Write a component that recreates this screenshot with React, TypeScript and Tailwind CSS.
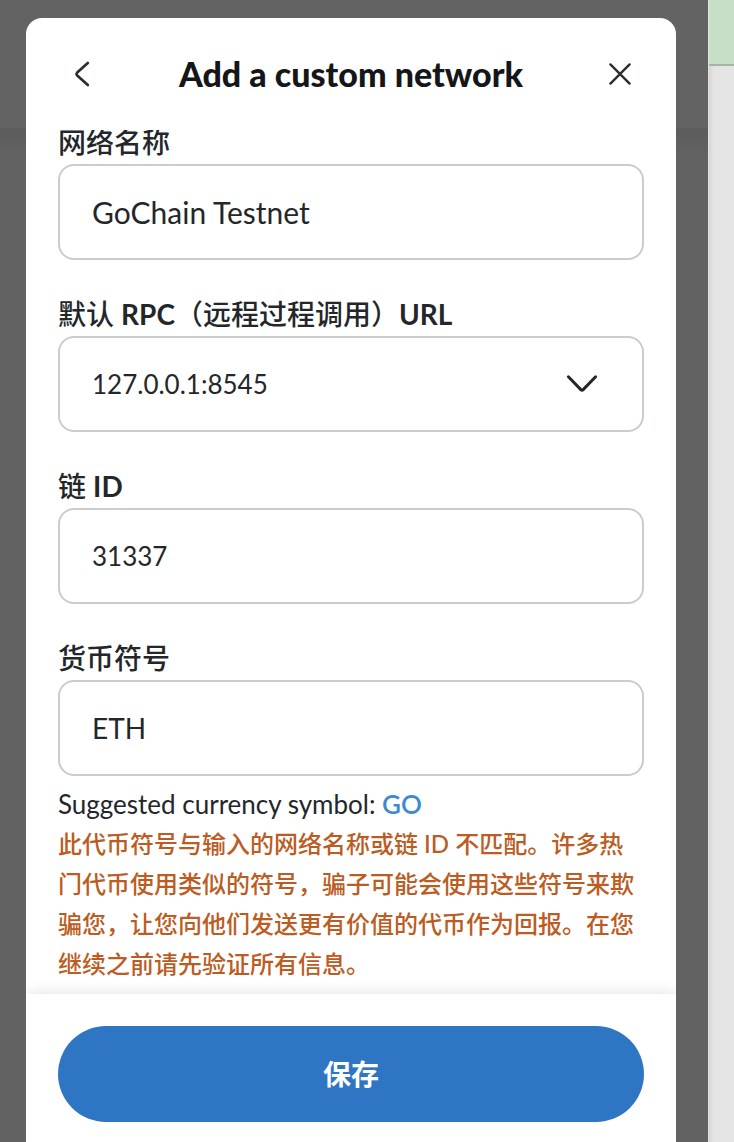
import { useState, type ReactNode } from "react";

type FieldProps = { id: string; label: ReactNode; children: ReactNode };

function Field({ id, label, children }: FieldProps) {
  return (
    <div className="flex flex-col">
      <label htmlFor={id} className="text-[28px] leading-[44px] font-medium">
        {label}
      </label>
      {children}
    </div>
  );
}

type TextFieldProps = { id: string; label: ReactNode; initial: string; size: string };

function TextField({ id, label, initial, size }: TextFieldProps) {
  const [value, setValue] = useState(initial);
  return (
    <Field id={id} label={label}>
      <input
        id={id}
        type="text"
        value={value}
        onChange={(e) => setValue(e.target.value)}
        className={`h-24 w-full rounded-2xl border-2 border-[#c8cdd2] bg-white px-8 outline-none ${size}`}
      />
    </Field>
  );
}

export default function App() {
  return (
    <div className="flex h-screen overflow-hidden bg-[#e5e5e5] font-['Lato','Noto_Sans_CJK_SC',sans-serif] text-[#24272a]">
      <div className="grid min-w-0 flex-1 grid-rows-[128px_1fr] bg-[#626262]">
        <div className="col-start-1 row-start-1 bg-[#636363]" />
        <div className="col-start-1 row-start-2 h-7 bg-linear-to-b from-[#5c5c5c] to-[#626262]" />
        <section
          role="dialog"
          aria-labelledby="dialog-title"
          className="z-10 col-start-1 row-span-2 row-start-1 mx-8 mt-[18px] ml-[26px] flex min-h-0 flex-col overflow-hidden rounded-t-2xl bg-white"
        >
          <header className="flex h-28 shrink-0 items-center justify-between px-8">
            <button type="button" aria-label="Back" className="flex size-12 items-center justify-center">
              <svg viewBox="0 0 32 32" className="size-8" fill="none" stroke="#2b2e31" strokeWidth="2.7" strokeLinecap="round" strokeLinejoin="round">
                <path d="M21.8 5 L11.2 14.6 Q9.8 16 11.2 17.4 L21.8 27" />
              </svg>
            </button>
            <h1 id="dialog-title" className="text-[34px] leading-10 font-black text-[#141618]">
              Add a custom network
            </h1>
            <button type="button" aria-label="Close" className="flex size-12 items-center justify-center">
              <svg viewBox="0 0 32 32" className="size-8" fill="none" stroke="#2b2e31" strokeWidth="2.4" strokeLinecap="round">
                <path d="M6.4 6.4 L25.6 25.6 M25.6 6.4 L6.4 25.6" />
              </svg>
            </button>
          </header>

          <div className="min-h-0 flex-1 overflow-hidden px-8">
            <form id="network-form" className="-mt-2.5 flex flex-col gap-8" onSubmit={(e) => e.preventDefault()}>
              <TextField id="network-name" label="网络名称" initial="GoChain Testnet" size="text-[30px]" />
              <Field
                id="rpc-url"
                label={
                  <>
                    默认 <span className="font-bold">RPC</span>（远程过程调用）<span className="font-bold">URL</span>
                  </>
                }
              >
                <div className="relative">
                  <select
                    id="rpc-url"
                    className="h-24 w-full appearance-none rounded-2xl border-2 border-[#c8cdd2] bg-white px-8 text-[26px] outline-none"
                  >
                    <option>127.0.0.1:8545</option>
                  </select>
                  <svg
                    viewBox="0 0 40 40"
                    className="pointer-events-none absolute inset-y-0 right-[42px] my-auto size-10"
                    fill="none"
                    stroke="#24272a"
                    strokeWidth="3"
                    strokeLinecap="round"
                    strokeLinejoin="round"
                  >
                    <path d="M6.4 12.8 L18.8 25.6 Q20 26.8 21.2 25.6 L33.6 12.8" />
                  </svg>
                </div>
              </Field>
              <TextField
                id="chain-id"
                label={
                  <>
                    链 <span className="font-bold">ID</span>
                  </>
                }
                initial="31337"
                size="text-[26px]"
              />
              <div className="flex flex-col gap-2">
                <TextField id="symbol" label="货币符号" initial="ETH" size="text-[28px]" />
                <div>
                  <p className="text-[26px] leading-10">
                    Suggested currency symbol:{" "}
                    <a href="#symbol" className="font-semibold text-[#3b8ad2]">
                      GO
                    </a>
                  </p>
                  <p className="text-2xl leading-10 font-medium text-[#bc5c22]">
                    此代币符号与输入的网络名称或链 ID 不匹配。许多热门代币使用类似的符号，骗子可能会使用这些符号来欺骗您，让您向他们发送更有价值的代币作为回报。在您继续之前请先验证所有信息。
                  </p>
                </div>
              </div>
            </form>
          </div>

          <footer className="shrink-0 bg-white px-8 pt-8 pb-5 shadow-[0_0_14px_rgba(0,0,0,0.13)]">
            <button
              type="submit"
              form="network-form"
              className="h-24 w-full rounded-full bg-[#2e75c4] text-[28px] font-semibold text-white"
            >
              保存
            </button>
          </footer>
        </section>
      </div>
      <aside className="flex w-[26px] shrink-0 flex-col border-l border-[#dfe4d8]">
        <div className="h-[66px] border-b-2 border-[#a4b5a4] bg-[#c8dfc7]" />
        <div className="flex-1 bg-linear-to-r from-[#d6d6d6] to-[#e5e5e5] to-20%" />
      </aside>
    </div>
  );
}
